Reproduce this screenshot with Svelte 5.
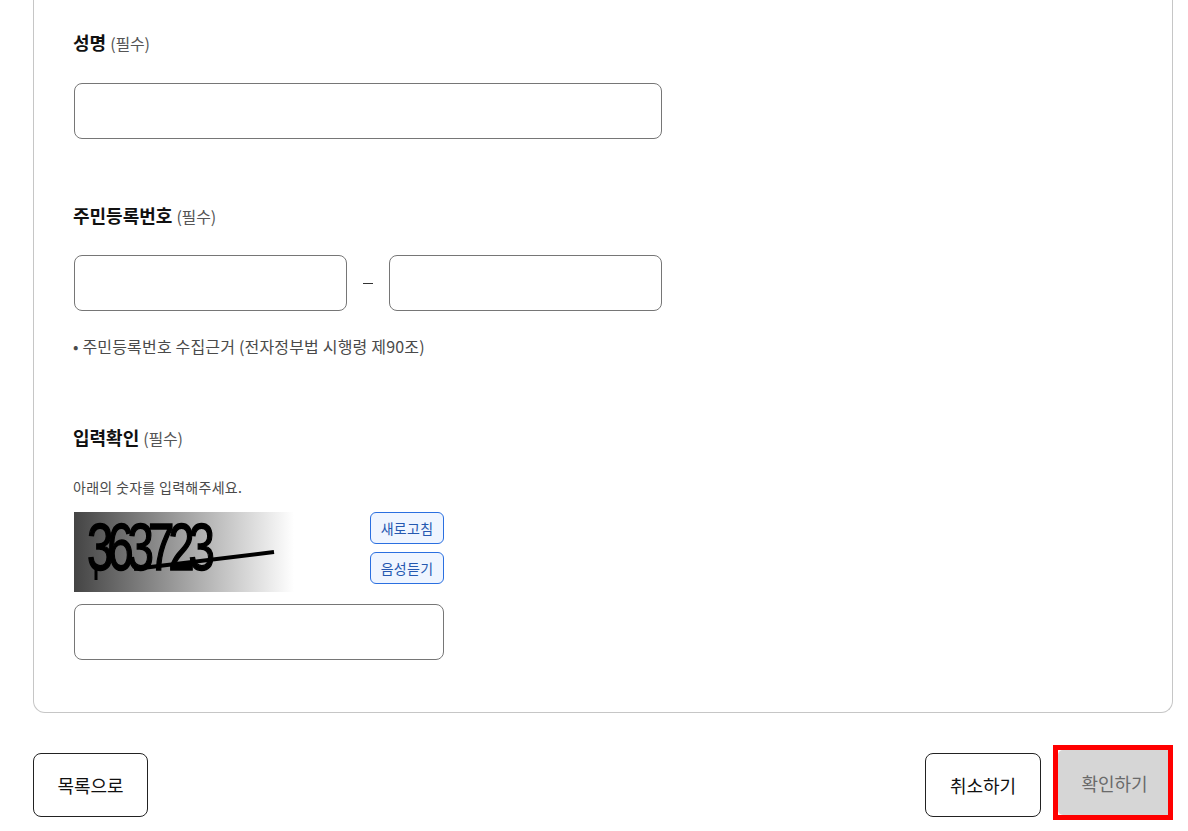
<script>
  let name = ''
  let idFront = ''
  let idBack = ''
  let captcha = ''
</script>

<div class="page">
  <div class="panel">
    <div class="field first">
      <p class="label"><b>성명</b> <span>(필수)</span></p>
      <input class="wide" type="text" bind:value={name} />
    </div>

    <div class="field second">
      <p class="label short"><b>주민등록번호</b> <span>(필수)</span></p>
      <div class="id-row">
        <input type="text" bind:value={idFront} />
        <i class="dash"></i>
        <input type="text" bind:value={idBack} />
      </div>
      <p class="note">• 주민등록번호 수집근거 (전자정부법 시행령 제90조)</p>
    </div>

    <div class="field">
      <p class="label"><b>입력확인</b> <span>(필수)</span></p>
      <p class="hint">아래의 숫자를 입력해주세요.</p>
      <div class="captcha-row">
        <svg class="captcha" width="220" height="80" viewBox="0 0 220 80" role="img" aria-label="363723">
          <defs>
            <linearGradient id="fade">
              <stop offset="0" stop-color="#444" />
              <stop offset="1" stop-color="#fff" />
            </linearGradient>
          </defs>
          <rect width="220" height="80" fill="url(#fade)" />
          <text transform="translate(13 58) scale(0.72 1)">363723</text>
          <path d="M22 52 L22 68" stroke="#000" stroke-width="3" />
          <path d="M60 57 L200 40" stroke="#000" stroke-width="4" />
          <path d="M99 51 L118 51 L118 58 L99 58 Z" fill="#000" />
        </svg>
        <div class="captcha-btns">
          <button>새로고침</button>
          <button>음성듣기</button>
        </div>
      </div>
      <input class="captcha-input" type="text" bind:value={captcha} />
    </div>
  </div>

  <div class="actions">
    <button class="btn">목록으로</button>
    <div class="right">
      <button class="btn">취소하기</button>
      <div class="highlight"><button class="btn confirm" disabled>확인하기</button></div>
    </div>
  </div>
</div>

<style>
  :global(body) {
    background: #fff;
    font-family: "Noto Sans CJK KR", "Noto Sans", sans-serif;
    color: #1a1a1a;
    overflow: hidden;
  }

  .page {
    box-sizing: border-box;
    width: 1188px;
    height: 831px;
    padding: 0 15px 0 33px;
    overflow: hidden;
  }

  .panel {
    box-sizing: border-box;
    height: 713px;
    padding: 29px 40px 0;
    border: 1px solid #c6c6c6;
    border-top: 0;
    border-radius: 0 0 12px 12px;
  }

  .first {
    margin-bottom: 63px;
  }

  .second {
    margin-bottom: 66px;
  }

  .label {
    margin: 0 0 27px -1px;
    font-size: 18px;
    line-height: 27px;
  }

  .first .label {
    margin-bottom: 26px;
  }

  .label.short {
    margin-bottom: 25px;
  }

  .label b {
    font-weight: 700;
    color: #111;
  }

  .label span {
    font-size: 16px;
    letter-spacing: -0.2px;
    color: #555;
  }

  input {
    display: block;
    box-sizing: border-box;
    height: 56px;
    width: 273px;
    padding: 0 12px;
    background: #fff;
    border: 1px solid #767676;
    border-radius: 8px;
    outline: none;
  }

  input.wide {
    width: 588px;
  }

  .id-row {
    display: flex;
    align-items: center;
    width: 588px;
    justify-content: space-between;
  }

  .dash {
    display: block;
    width: 10px;
    height: 1px;
    background: #333;
  }

  .note {
    margin: 23px 0 0 -1px;
    font-size: 16px;
    line-height: 24px;
    letter-spacing: 0.18px;
    color: #4a4a4a;
  }

  .hint {
    margin: -2px 0 0 -1px;
    font-size: 14px;
    line-height: 20px;
    letter-spacing: 0.3px;
    color: #4a4a4a;
  }

  .captcha-row {
    display: flex;
    justify-content: space-between;
    width: 370px;
    margin-top: 15px;
  }

  .captcha {
    display: block;
  }

  .captcha text {
    font-family: "Liberation Sans", sans-serif;
    font-size: 66px;
    letter-spacing: -8.5px;
    fill: #000;
    stroke: #000;
    stroke-width: 1.5px;
  }

  .captcha-btns {
    display: flex;
    flex-direction: column;
    gap: 8px;
  }

  .captcha-btns button {
    box-sizing: border-box;
    width: 74px;
    height: 32px;
    padding: 0;
    font-family: inherit;
    font-size: 14px;
    letter-spacing: 0.3px;
    color: #2558b0;
    background: #eff5ff;
    border: 1px solid #2a6fe0;
    border-radius: 6px;
  }

  .captcha-input {
    width: 370px;
    margin-top: 12px;
  }

  .actions {
    display: flex;
    justify-content: space-between;
    align-items: flex-start;
    margin-top: 40px;
  }

  .right {
    display: flex;
    align-items: flex-start;
    gap: 12px;
  }

  .btn {
    box-sizing: border-box;
    width: 115px;
    height: 64px;
    padding: 0;
    font-family: inherit;
    font-size: 18px;
    color: #111;
    background: #fff;
    border: 1px solid #222;
    border-radius: 8px;
  }

  .right > .btn {
    width: 116px;
  }

  .highlight {
    box-sizing: border-box;
    height: 75px;
    margin-top: -8px;
    border: 5px solid #ff0000;
  }

  .btn.confirm {
    display: block;
    width: 110px;
    height: 65px;
    padding: 1px 0 0 3px;
    color: #6a6a6a;
    background: #d6d6d6;
    border: 0;
    border-radius: 5px 0 0 5px;
  }
</style>
